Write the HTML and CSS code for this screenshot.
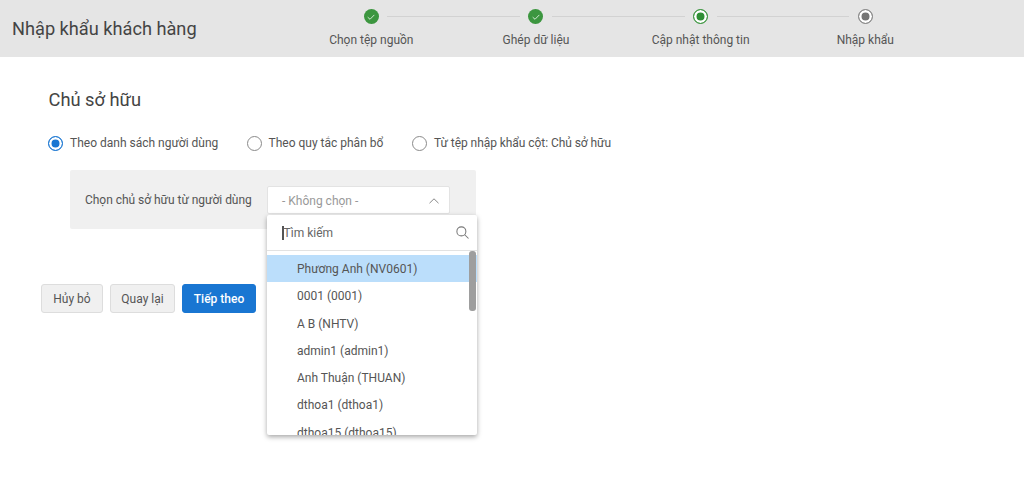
FILE: index.html
```html
<!DOCTYPE html>
<html lang="vi">
<head>
<meta charset="utf-8">
<title>Nhập khẩu khách hàng</title>
<link rel="stylesheet" href="styles.css">
</head>
<body>
<header class="topbar">
  <h1 class="page-title">Nhập khẩu khách hàng</h1>
  <ol class="steps">
    <li class="step">
      <div class="track"><span class="line line-hidden"></span><span class="dot dot-done"><svg viewBox="0 0 16 16" class="check"><path d="M4.2 8.2 6.9 10.6 11.8 5.6"/></svg></span><span class="line"></span></div>
      <span class="step-label">Chọn tệp nguồn</span>
    </li>
    <li class="step">
      <div class="track"><span class="line"></span><span class="dot dot-done"><svg viewBox="0 0 16 16" class="check"><path d="M4.2 8.2 6.9 10.6 11.8 5.6"/></svg></span><span class="line"></span></div>
      <span class="step-label">Ghép dữ liệu</span>
    </li>
    <li class="step">
      <div class="track"><span class="line"></span><span class="dot dot-current"></span><span class="line"></span></div>
      <span class="step-label">Cập nhật thông tin</span>
    </li>
    <li class="step">
      <div class="track"><span class="line"></span><span class="dot dot-todo"></span><span class="line line-hidden"></span></div>
      <span class="step-label">Nhập khẩu</span>
    </li>
  </ol>
</header>
<main class="content">
  <h2 class="section-title">Chủ sở hữu</h2>
  <div class="radios">
    <label class="radio radio-first"><span class="radio-mark radio-on"></span>Theo danh sách người dùng</label>
    <label class="radio radio-second"><span class="radio-mark"></span>Theo quy tắc phân bổ</label>
    <label class="radio radio-third"><span class="radio-mark"></span>Từ tệp nhập khẩu cột: Chủ sở hữu</label>
  </div>
  <section class="panel">
    <span class="panel-label">Chọn chủ sở hữu từ người dùng</span>
    <div class="select-wrap">
      <div class="select">
        <span class="select-value">- Không chọn -</span>
        <svg class="chevron" viewBox="0 0 12 8"><path d="M1.5 6.2 6 1.8 10.5 6.2"/></svg>
      </div>
      <div class="dropdown">
        <div class="search">
          <span class="caret"></span><span class="search-text">Tìm kiếm</span>
          <svg class="search-icon" viewBox="0 0 16 16"><circle cx="6.8" cy="6.8" r="4.8"/><path d="M10.4 10.4 14.4 14.4"/></svg>
        </div>
        <div class="list">
          <div class="thumb"></div>
          <div class="item item-active">Phương Anh (NV0601)</div>
          <div class="item">0001 (0001)</div>
          <div class="item">A B (NHTV)</div>
          <div class="item">admin1 (admin1)</div>
          <div class="item">Anh Thuận (THUAN)</div>
          <div class="item">dthoa1 (dthoa1)</div>
          <div class="item">dthoa15 (dthoa15)</div>
        </div>
      </div>
    </div>
  </section>
  <div class="actions">
    <button class="btn btn-cancel">Hủy bỏ</button>
    <button class="btn btn-back">Quay lại</button>
    <button class="btn btn-primary">Tiếp theo</button>
  </div>
</main>
</body>
</html>
```
FILE: styles.css
```css
* { box-sizing: border-box; }
html, body { margin: 0; padding: 0; }
body {
  font-family: Roboto, "Liberation Sans", sans-serif;
  font-size: 12px;
  color: #444;
  background: #fff;
  height: 494px;
  overflow: hidden;
}
.topbar {
  height: 57px;
  background: #e5e5e5;
  display: flex;
  padding-left: 12px;
}
.page-title {
  margin: 0;
  width: 277px;
  font-size: 18.2px;
  font-weight: 400;
  line-height: 57px;
  color: #444;
}
.steps {
  list-style: none;
  margin: 0;
  padding: 0;
  display: flex;
}
.step {
  width: 164.67px;
  display: flex;
  flex-direction: column;
  align-items: center;
}
.track {
  width: 100%;
  height: 15px;
  margin-top: 9px;
  display: flex;
  align-items: center;
}
.line {
  flex: 1;
  height: 1px;
  background: #d2d2d2;
}
.line-hidden { background: transparent; }
.dot {
  width: 15px;
  height: 15px;
  border-radius: 50%;
  margin: 0 8.5px;
  flex: none;
  display: flex;
  align-items: center;
  justify-content: center;
}
.dot-done { background: #3c963f; }
.check { width: 14px; height: 14px; }
.check path { fill: none; stroke: #d5ead5; stroke-width: 1.1; }
.dot-current { background: #2f8f35; border: 1px solid #3c963f; box-shadow: inset 0 0 0 2.5px #fff; }
.dot-todo { background: #757575; border: 1px solid #8a8a8a; box-shadow: inset 0 0 0 2.5px #fff; }
.step-label {
  margin-top: 8px;
  line-height: 16px;
  color: #555;
}
.content { padding: 0 0 0 41px; }
.section-title {
  margin: 32px 0 0 7.5px;
  font-size: 18.3px;
  font-weight: 400;
  line-height: 21px;
  color: #444;
}
.radios {
  display: flex;
  margin: 25px 0 0 7px;
  height: 16px;
  align-items: center;
}
.radio {
  display: flex;
  align-items: center;
  color: #555;
}
.radio-first { width: 198.5px; }
.radio-second { width: 165.5px; }
.radio-third { letter-spacing: -.06px; }
.radio-mark {
  width: 15px;
  height: 15px;
  border-radius: 50%;
  border: 1px solid #8a8a8a;
  background: #fff;
  margin-right: 7px;
  flex: none;
}
.radio-on {
  border-color: #1976d2;
  background: #1976d2;
  box-shadow: inset 0 0 0 2.5px #fff;
}
.panel {
  width: 406px;
  height: 59px;
  margin: 19px 0 0 29px;
  background: #f0f0f0;
  border-radius: 2px;
  padding: 16px 0 0 15px;
  display: flex;
  align-items: flex-start;
}
.panel-label {
  width: 182px;
  line-height: 28px;
  letter-spacing: -.03px;
  color: #555;
}
.select-wrap { position: relative; }
.select {
  width: 183px;
  height: 28px;
  background: #fff;
  border: 1px solid #e3e3e3;
  border-radius: 2px;
  display: flex;
  align-items: center;
  justify-content: space-between;
  padding: 1px 14px 0;
}
.select-value { color: #999; }
.chevron { width: 12px; height: 8px; margin-right: -5px; }
.chevron path { fill: none; stroke: #888; stroke-width: 1; }
.dropdown {
  position: absolute;
  top: 29px;
  left: 0;
  width: 210px;
  height: 220px;
  background: #fff;
  box-shadow: 0 2px 5px rgba(0, 0, 0, .35);
  border-radius: 2px;
  overflow: hidden;
  z-index: 5;
}
.search {
  height: 36px;
  border-bottom: 1px solid #e2e2e2;
  display: flex;
  align-items: center;
  padding: 0 7px 0 15px;
}
.caret { width: 1.5px; height: 14px; background: #555; }
.search-text { flex: 1; color: #666; }
.search-icon { width: 15px; height: 15px; }
.search-icon circle, .search-icon path { fill: none; stroke: #777; stroke-width: 1.1; }
.list { position: relative; padding-top: 4px; }
.thumb {
  position: absolute;
  top: 0;
  right: 1px;
  width: 7px;
  height: 60px;
  border-radius: 3px;
  background: #9e9e9e;
}
.item {
  height: 27.3px;
  line-height: 28.3px;
  padding-left: 30px;
  color: #555;
}
.item-active { background: #bbdefb; }
.actions {
  display: flex;
  gap: 7px;
  margin-top: 55px;
}
.btn {
  height: 29px;
  padding: 0;
  font: inherit;
  color: #555;
  background: #f0f0f0;
  border: 1px solid #ddd;
  border-radius: 3px;
}
.btn-cancel { width: 62px; }
.btn-back { width: 65px; }
.btn-primary {
  width: 74px;
  background: #1976d2;
  border-color: #1976d2;
  color: #fff;
  font-weight: 500;
}
```
